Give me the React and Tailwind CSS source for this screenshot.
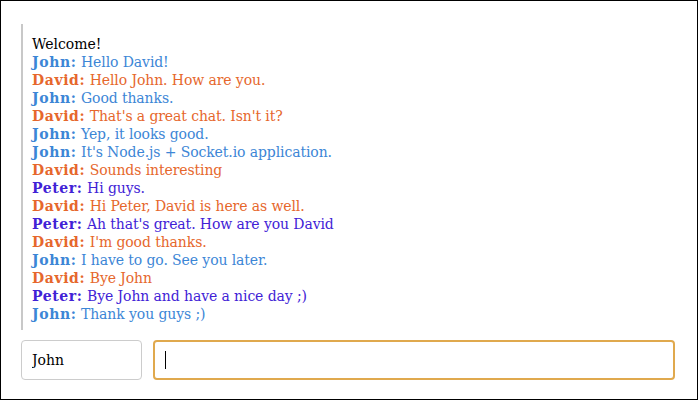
const MESSAGES = [
  { name: "John", text: "Hello David!" },
  { name: "David", text: "Hello John. How are you." },
  { name: "John", text: "Good thanks." },
  { name: "David", text: "That's a great chat. Isn't it?" },
  { name: "John", text: "Yep, it looks good." },
  { name: "John", text: "It's Node.js + Socket.io application." },
  { name: "David", text: "Sounds interesting" },
  { name: "Peter", text: "Hi guys." },
  { name: "David", text: "Hi Peter, David is here as well." },
  { name: "Peter", text: "Ah that's great. How are you David" },
  { name: "David", text: "I'm good thanks." },
  { name: "John", text: "I have to go. See you later." },
  { name: "David", text: "Bye John" },
  { name: "Peter", text: "Bye John and have a nice day ;)" },
  { name: "John", text: "Thank you guys ;)" },
];

const COLORS = {
  John: "text-[#3c86d6]",
  David: "text-[#e6672c]",
  Peter: "text-[#4122d6]",
};

export default function App() {
  return (
    <div className="w-[698px] h-[400px] border border-black bg-white px-5 pt-[23px] font-['DejaVu_Serif',serif] text-[14px] leading-[18px] text-black">
      <div className="border-l-2 border-[#c8c8c8] pl-[9px] pt-[11px] pb-[7px]">
        <div>Welcome!</div>
        {MESSAGES.map((m, i) => (
          <div key={i} className={COLORS[m.name]}>
            <b className="tracking-[0.6px]">{m.name}:</b>{" "}
            <span className="tracking-[-0.1px]">{m.text}</span>
          </div>
        ))}
      </div>
      <div className="flex gap-[11px] mt-[10px]">
        <input
          defaultValue="John"
          className="w-[121px] h-10 rounded-[4px] border border-[#cccccc] px-[10px] text-black outline-none"
        />
        <div className="flex-1 mr-[2px] h-10 rounded-[4px] border-2 border-[#e0a94e] flex items-center px-[10px]">
          <div className="w-px h-[18px] bg-black" />
        </div>
      </div>
    </div>
  );
}
